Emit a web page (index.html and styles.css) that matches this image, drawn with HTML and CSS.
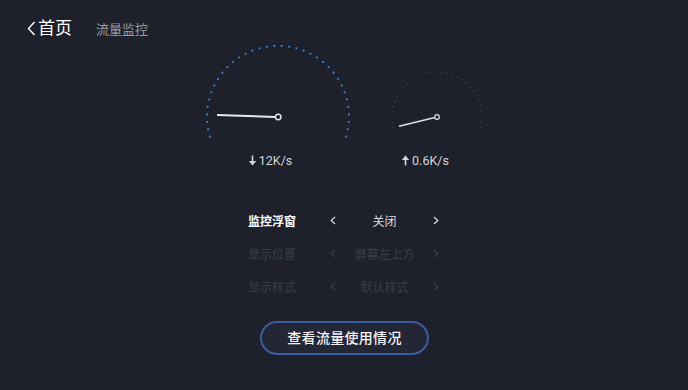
FILE: index.html
```html
<!DOCTYPE html>
<html lang="zh">
<head>
    <meta charset="UTF-8">
    <title>流量监控</title>
    <link rel="stylesheet" href="styles.css">
</head>
<body>
    <div id="page">
        <div class="header">
            <a class="back" href="javascript:;">
                <svg class="backIcon" width="9" height="15" viewBox="0 0 9 15"><polyline points="7.5,1 1.5,7.5 7.5,14" fill="none" stroke="#fff" stroke-width="1.4"/></svg>
                <span>首页</span>
            </a>
            <span class="title">流量监控</span>
        </div>
        <div class="gauges">
            <div class="gauge big">
                <svg width="150" height="100" viewBox="0 0 150 100">
                    <path d="M6.8 94.6 A71 71 0 1 1 143.2 94.6" fill="none" stroke="#3b82d2" stroke-width="2.2" stroke-linecap="round" stroke-dasharray="0 7.5"/>
                    <line x1="14" y1="73" x2="72" y2="75" stroke="#e8e8ea" stroke-width="2"/>
                    <circle cx="75.2" cy="75" r="2.8" fill="#1e212b" stroke="#e8e8ea" stroke-width="1.4"/>
                </svg>
                <div class="speed">
                    <svg width="9" height="11" viewBox="0 0 9 11"><path d="M4.5 0.5 V8" fill="none" stroke="#d4d5d9" stroke-width="1.6"/><path d="M0.8 6 L4.5 10.5 L8.2 6 Z" fill="#d4d5d9"/></svg>
                    <span>12K/s</span>
                </div>
            </div>
            <div class="gauge small">
                <svg width="100" height="100" viewBox="0 0 100 100">
                    <path d="M6.3 85.9 A45 45 0 1 1 93.7 85.9" fill="none" stroke="#2c4468" stroke-width="1.6" stroke-linecap="round" stroke-dasharray="0 5.4"/>
                    <line x1="12" y1="84.2" x2="47.8" y2="75.6" stroke="#e0e0e3" stroke-width="1.5"/>
                    <circle cx="50" cy="75" r="2.3" fill="#1e212b" stroke="#e0e0e3" stroke-width="1.2"/>
                </svg>
                <div class="speed">
                    <svg width="9" height="11" viewBox="0 0 9 11"><path d="M4.5 10.5 V3" fill="none" stroke="#d4d5d9" stroke-width="1.6"/><path d="M0.8 5 L4.5 0.5 L8.2 5 Z" fill="#d4d5d9"/></svg>
                    <span>0.6K/s</span>
                </div>
            </div>
        </div>
        <ul class="options">
            <li class="active">
                <span class="label">监控浮窗</span>
                <svg class="arrow" width="6" height="9" viewBox="0 0 6 9"><polyline points="5,1 1.2,4.5 5,8" fill="none" stroke="currentColor" stroke-width="1.2"/></svg>
                <span class="value">关闭</span>
                <svg class="arrow" width="6" height="9" viewBox="0 0 6 9"><polyline points="1,1 4.8,4.5 1,8" fill="none" stroke="currentColor" stroke-width="1.2"/></svg>
            </li>
            <li>
                <span class="label">显示位置</span>
                <svg class="arrow" width="6" height="9" viewBox="0 0 6 9"><polyline points="5,1 1.2,4.5 5,8" fill="none" stroke="currentColor" stroke-width="1.2"/></svg>
                <span class="value">屏幕左上方</span>
                <svg class="arrow" width="6" height="9" viewBox="0 0 6 9"><polyline points="1,1 4.8,4.5 1,8" fill="none" stroke="currentColor" stroke-width="1.2"/></svg>
            </li>
            <li>
                <span class="label">显示样式</span>
                <svg class="arrow" width="6" height="9" viewBox="0 0 6 9"><polyline points="5,1 1.2,4.5 5,8" fill="none" stroke="currentColor" stroke-width="1.2"/></svg>
                <span class="value">默认样式</span>
                <svg class="arrow" width="6" height="9" viewBox="0 0 6 9"><polyline points="1,1 4.8,4.5 1,8" fill="none" stroke="currentColor" stroke-width="1.2"/></svg>
            </li>
        </ul>
        <div class="btnWrap">
            <a class="usage" href="javascript:;">查看流量使用情况</a>
        </div>
    </div>
</body>
</html>
```

FILE: styles.css
```css
body,div,ul,li,span,a{margin: 0; padding: 0;}
ul,li{list-style: none;}
a{text-decoration: none;}
body{background-color: #1e212b; font-family: Roboto, "Noto Sans CJK SC", sans-serif;}
#page{width: 688px; height: 390px; overflow: hidden;}
.header{display: flex; align-items: center; height: 24px; margin-top: 16px; padding-left: 27px;}
.header .back{display: flex; align-items: center; color: #fff; font-size: 17px; line-height: 24px;}
.header .backIcon{margin-right: 2px;}
.header .title{margin-left: 24px; font-size: 13px; color: #9a9da5;}
.gauges{display: flex; margin-top: 2px; padding-left: 203px;}
.gauge.small{margin-left: 34px;}
.gauge svg{display: block;}
.gauge .speed{display: flex; align-items: center; justify-content: center; height: 16px; margin-top: 10px; font-size: 12.5px; color: #d4d5d9;}
.gauge .speed svg{margin-right: 2px;}
.gauge.big .speed{padding-right: 16px;}
.gauge.small .speed{padding-right: 24px;}
.options{margin-top: 36px; padding-left: 248px;}
.options li{display: grid; grid-template-columns: 79px 12px 91px 12px; align-items: center; height: 33px; font-size: 12px; color: #3a3e49;}
.options li .arrow{justify-self: center;}
.options li .value{text-align: center;}
.options li.active{color: #dcdde1;}
.options li.active .label{font-weight: bold; color: #fff;}
.btnWrap{margin-top: 18px; padding-left: 260px;}
.usage{display: block; width: 165px; height: 30px; line-height: 30px; border: 2px solid #3a5d9f; border-radius: 17px; background-color: #222635; color: #f2f2f4; font-size: 14px; font-weight: 500; text-align: center; letter-spacing: 0.3px;}
```
